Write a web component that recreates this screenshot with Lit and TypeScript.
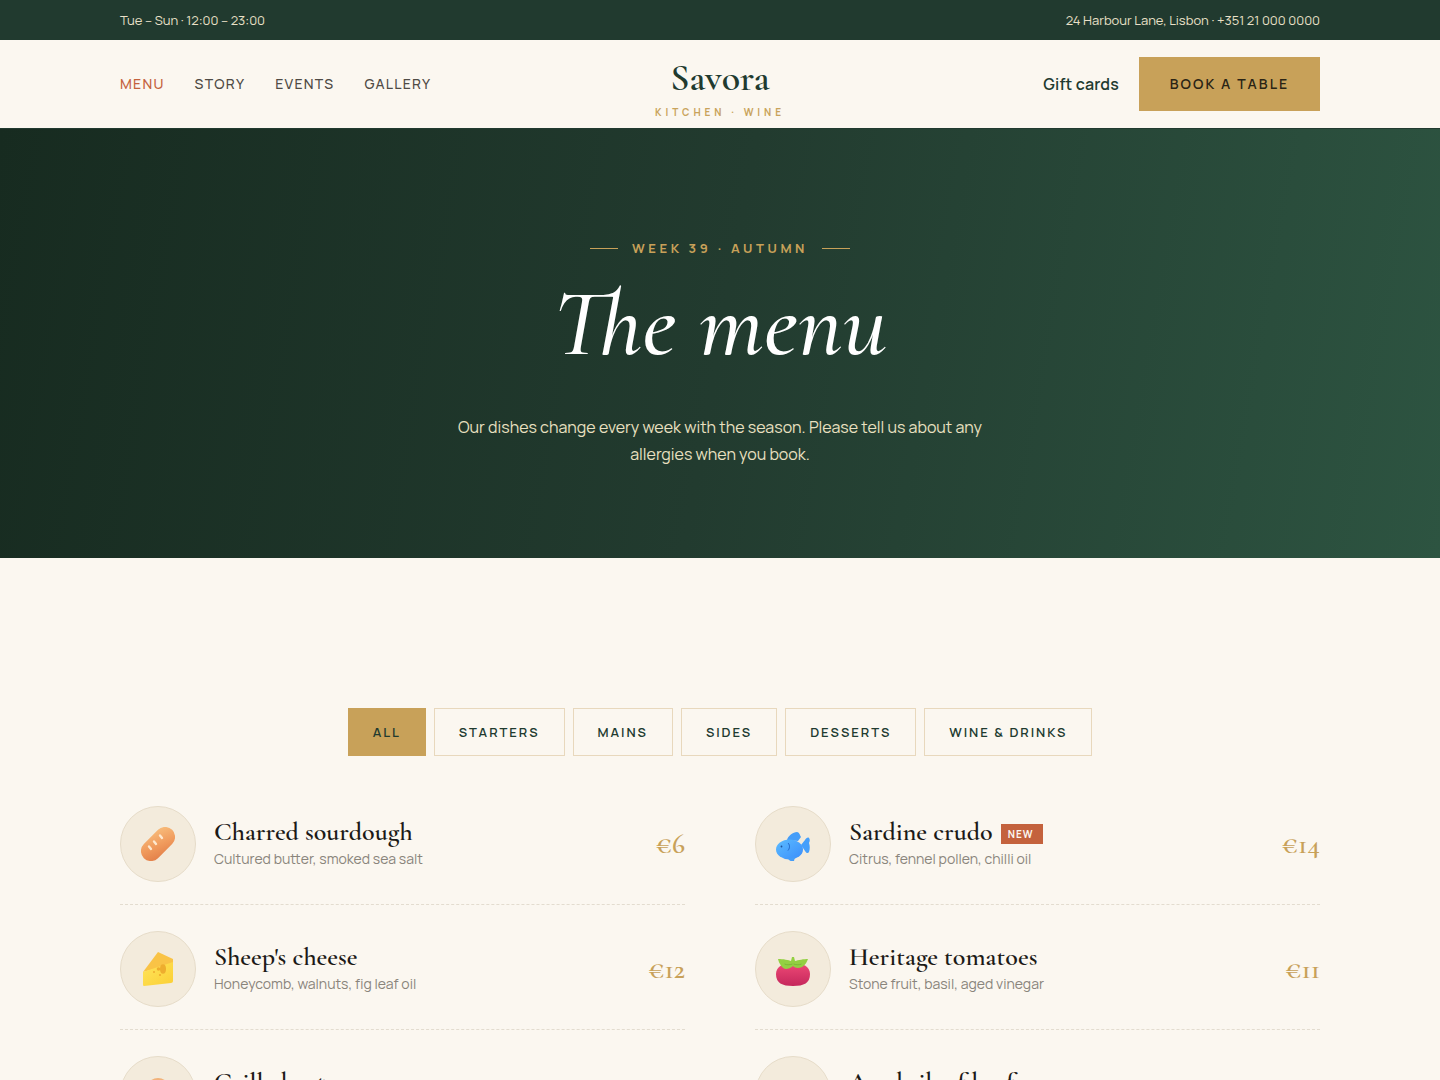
import { LitElement, html, css, svg } from "lit";
import { customElement } from "lit/decorators.js";

const bread = svg`<svg viewBox="0 0 34 34" width="34" height="34">
<defs><linearGradient id="b1" x1="0.9" y1="0" x2="0.1" y2="1"><stop offset="0" stop-color="#f8bd7c"/><stop offset="0.55" stop-color="#f09a5c"/><stop offset="1" stop-color="#e27e48"/></linearGradient></defs>
<rect x="-3" y="7" width="40" height="20" rx="10" transform="rotate(-45 17 17)" fill="url(#b1)"/>
<g stroke="#fde8cf" stroke-width="2.4" stroke-linecap="round"><path d="M8 19.5l2 2.4"/><path d="M13 14.5l2 2.4"/><path d="M19 8.5l2 2.4"/></g></svg>`;

const fish = svg`<svg viewBox="0 -5 34 34" width="34" height="34">
<defs><linearGradient id="f1" x1="0" y1="0" x2="1" y2="1"><stop offset="0" stop-color="#5cbcff"/><stop offset="1" stop-color="#3a8dfb"/></linearGradient></defs>
<path d="M11 8c1-4 6-8 10-8 2 0 3 3 4 5l-3 4z" fill="#459df8"/>
<path d="M33 6c1 1 1 3 0 5 1 3 1 6 0 9-1 2-3 1-4-1l-4-6 4-5c1-2 3-3 4-2z" fill="#459ffb"/>
<ellipse cx="13.5" cy="17.5" rx="13.5" ry="10" fill="url(#f1)"/>
<path d="M12 26l7-1-1 4c-2 1-5 0-6-3z" fill="#459df8"/>
<path d="M12 11c2 2 2 5 0 7.5" fill="none" stroke="#1f63c4" stroke-width="1"/><circle cx="5.5" cy="14.5" r="0.9" fill="#1f4f99"/></svg>`;

const cheese = svg`<svg viewBox="-2 0 34 34" width="34" height="34">
<defs><linearGradient id="c1" x1="0" y1="0" x2="1" y2="1"><stop offset="0" stop-color="#ffe45c"/><stop offset="1" stop-color="#fbcf34"/></linearGradient></defs>
<path d="M0 20L15 0l15 7v5z" fill="#f9c346"/>
<path d="M0 20l30-10v19c0 1-1 2-2 2L1 34c-1 0-1-1-1-2z" fill="url(#c1)"/>
<ellipse cx="20" cy="17" rx="3" ry="4.8" fill="#eead2e"/><circle cx="15.5" cy="17" r="1.8" fill="#eead2e"/><circle cx="11" cy="20" r="1" fill="#eead2e"/><circle cx="17" cy="23" r="1.1" fill="#eead2e"/></svg>`;

const tomato = svg`<svg viewBox="0 -5 34 34" width="34" height="34">
<defs><linearGradient id="t1" x1="0" y1="0" x2="0" y2="1"><stop offset="0" stop-color="#ee4a76"/><stop offset="1" stop-color="#c5275c"/></linearGradient></defs>
<path d="M0 17C0 9 8 6 17 6s17 3 17 11c0 9-6 12-17 12S0 26 0 17z" fill="url(#t1)"/>
<path d="M2 2c5 0 11 1 13 2l1-4h2l1 4c3-1 9-2 13-2-2 6-6 9-10 9-2 0-4-1-5-2-2 2-5 3-7 3C7 12 3 7 2 2z" fill="#93d042"/>
<path d="M16.5 7c-3 1-6 1-8 0M17.5 7c3 1 6 1 8 0" stroke="#7db836" stroke-width="1" fill="none"/></svg>`;

const octopus = svg`<svg viewBox="0 0 34 34" width="34" height="34"><circle cx="17" cy="13" r="12" fill="#f2b27a"/></svg>`;
const beef = svg`<svg viewBox="0 0 34 34" width="34" height="34"><circle cx="17" cy="15" r="12" fill="#e0566b"/></svg>`;

const items = [
  { n: "Charred sourdough", d: "Cultured butter, smoked sea salt", p: "€6", i: bread },
  { n: "Sardine crudo", d: "Citrus, fennel pollen, chilli oil", p: "€14", i: fish, tag: true },
  { n: "Sheep's cheese", d: "Honeycomb, walnuts, fig leaf oil", p: "€12", i: cheese },
  { n: "Heritage tomatoes", d: "Stone fruit, basil, aged vinegar", p: "€11", i: tomato },
  { n: "Grilled octopus", d: "Romesco, charred lemon, parsley", p: "€18", i: octopus },
  { n: "Aged rib of beef", d: "Bone marrow, shallot, watercress", p: "€34", i: beef },
];

@customElement("app-root")
export class AppRoot extends LitElement {
  static styles = css`
    :host { display: block; background: #fbf7f0; font-family: Manrope, Inter, sans-serif; color: #1f3a2d; height: 1080px; overflow: hidden; line-height: 1.7; }
    .top { height: 40px; background: #213a2f; color: #e9e0c8; font-size: 13px; display: flex; align-items: center; justify-content: space-between; padding: 0 120px; }
    header { height: 88px; border-bottom: 1px solid #213a2f; display: grid; grid-template-columns: 1fr auto 1fr; align-items: center; padding: 0 120px; }
    nav { display: flex; gap: 30px; font-size: 14px; font-weight: 500; letter-spacing: 1.26px; color: #4f4b45; }
    nav .on { color: #c4623d; }
    .logo { display: flex; flex-direction: column; align-items: center; }
    .logo b { font-family: "Cormorant Garamond", "Liberation Serif", serif; font-size: 38px; line-height: 40px; font-weight: 600; color: #213a2f; margin-top: 7px; }
    .logo span { font-size: 10px; line-height: 12px; font-weight: 700; letter-spacing: 3.9px; color: #c9a35b; margin-top: 8px; }
    .right { display: flex; justify-content: flex-end; align-items: center; gap: 20px; }
    .gift { font-size: 16px; font-weight: 600; letter-spacing: 0.16px; color: #213a2f; padding-top: 2px; }
    .book { width: 181px; height: 54px; background: #c8a159; color: #2a2415; font-size: 14px; font-weight: 600; letter-spacing: 2.1px; display: flex; align-items: center; justify-content: center; }
    .hero { height: 429px; background: linear-gradient(100deg, #172b20 0%, #223b2f 50%, #2d5441 100%); display: flex; flex-direction: column; align-items: center; }
    .eyebrow { margin-top: 110px; height: 18px; display: flex; align-items: center; gap: 14px; color: #c8a159; font-size: 13px; font-weight: 700; letter-spacing: 3.6px; }
    .eyebrow i { width: 28px; height: 1px; background: #c8a159; }
    h1 { margin: 19px 0 0; font-family: "Cormorant Garamond", "Liberation Serif", serif; font-style: italic; font-weight: 500; font-size: 96px; line-height: 96px; color: #fff; }
    .hero p { margin: 42px 0 0; width: 560px; text-align: center; font-size: 16px; line-height: 27px; color: #e9e0c0; }
    .filters { margin-top: 150px; display: flex; justify-content: center; gap: 8px; }
    .filters span { height: 48px; box-sizing: border-box; padding: 0 24px; border: 1px solid #e8d8bd; display: flex; align-items: center; font-size: 13px; font-weight: 600; letter-spacing: 1.95px; color: #213a2f; }
    .filters .on { background: #c8a159; border-color: #c8a159; }
    .grid { margin: 50px 120px 0; display: grid; grid-template-columns: 565px 565px; column-gap: 70px; }
    .row { height: 125px; }
    .wrap { display: flex; gap: 18px; height: 99px; border-bottom: 1px dashed #e3dccf; box-sizing: border-box; }
    .ico { width: 76px; height: 76px; box-sizing: border-box; border-radius: 50%; border: 1px solid #e6dcc9; background: #f3ebdc; display: flex; align-items: center; justify-content: center; flex: none; }
    .ico svg { display: block; }
    .txt { flex: 1; padding-top: 10px; }
    .name { display: flex; align-items: center; gap: 8px; font-family: "Cormorant Garamond", "Liberation Serif", serif; font-size: 26px; line-height: 32px; font-weight: 600; color: #1c1a17; }
    .tag { background: #c4623d; color: #fbf7f0; font-family: Manrope, Inter, sans-serif; font-size: 10px; line-height: 20px; height: 20px; margin-top: 4px; padding: 0 9px 0 7px; font-weight: 700; letter-spacing: 1px; }
    .desc { font-size: 14px; line-height: 22px; color: #8a857c; }
    .price { font-family: "Cormorant Garamond", "Liberation Serif", serif; font-size: 28px; line-height: 32px; color: #c8a159; padding-top: 22px; font-weight: 600; }
  `;
  render() {
    return html`
      <div class="top"><span>Tue – Sun · 12:00 – 23:00</span><span>24 Harbour Lane, Lisbon · +351 21 000 0000</span></div>
      <header>
        <nav><span class="on">MENU</span><span>STORY</span><span>EVENTS</span><span>GALLERY</span></nav>
        <div class="logo"><b>Savora</b><span>KITCHEN · WINE</span></div>
        <div class="right"><span class="gift">Gift cards</span><span class="book">BOOK A TABLE</span></div>
      </header>
      <section class="hero">
        <div class="eyebrow"><i></i>WEEK 39 · AUTUMN<i></i></div>
        <h1>The menu</h1>
        <p>Our dishes change every week with the season. Please tell us about any allergies when you book.</p>
      </section>
      <div class="filters">
        <span class="on">ALL</span><span>STARTERS</span><span>MAINS</span><span>SIDES</span><span>DESSERTS</span><span>WINE &amp; DRINKS</span>
      </div>
      <div class="grid">
        ${items.map(it => html`<div class="row"><div class="wrap">
          <div class="ico">${it.i}</div>
          <div class="txt"><div class="name">${it.n}${it.tag ? html`<span class="tag">NEW</span>` : ""}</div><div class="desc">${it.d}</div></div>
          <div class="price">${it.p}</div>
        </div></div>`)}
      </div>`;
  }
}
